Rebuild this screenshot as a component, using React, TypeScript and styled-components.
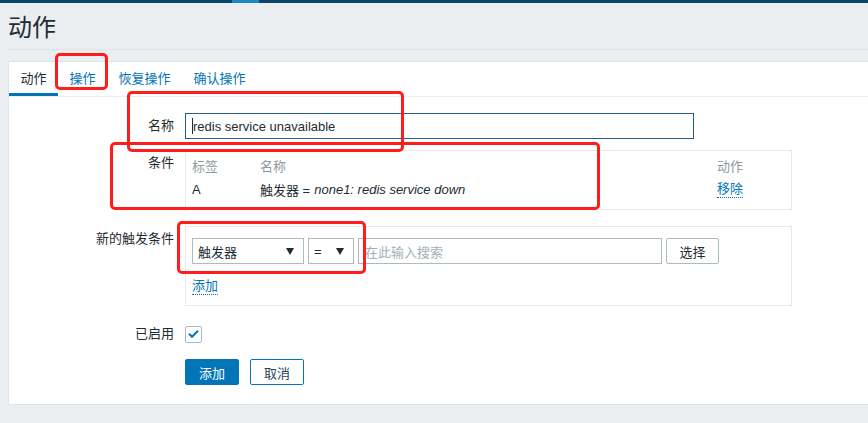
import React from "react";
import styled, { createGlobalStyle } from "styled-components";

const Global = createGlobalStyle`
  html, body { margin: 0; padding: 0; background: #ebeef0; }
  body {
    font-family: "Liberation Sans", Arial, "Noto Sans CJK SC", sans-serif;
    font-size: 13px;
    color: #1f2c33;
  }
  * { box-sizing: border-box; }
`;

const Page = styled.div`
  position: relative;
  width: 868px;
  height: 423px;
  overflow: hidden;
`;

const TopBar = styled.div`
  display: flex;
  height: 3px;
  background: #0b4668;
`;

const TopBarMark = styled.div`
  margin-left: 232px;
  width: 27px;
  background: #1e87c9;
`;

const Header = styled.header`
  margin-left: 8px;
  height: 47px;
  padding-top: 10px;
  border-bottom: 1px solid #dde2e5;
`;

const Title = styled.h1`
  margin: 0;
  font-size: 24px;
  line-height: 30px;
  font-weight: normal;
  color: #1f2c33;
`;

const Panel = styled.main`
  margin: 11px 0 0 8px;
  height: 344px;
  background: #fff;
  border: 1px solid #dfe4e7;
  border-right: none;
`;

const Tabs = styled.nav`
  display: flex;
  height: 35px;
  border-bottom: 1px solid #ebeef0;
`;

const Tab = styled.div<{ $active?: boolean }>`
  display: flex;
  align-items: center;
  height: 34px;
  padding: 0 11.5px;
  border-bottom: 3px solid ${(p) => (p.$active ? "#0275b8" : "transparent")};
  color: ${(p) => (p.$active ? "#1f2c33" : "#0275b8")};
`;

const Form = styled.div`
  padding-top: 16px;
`;

const Row = styled.div<{ $mt?: number }>`
  display: grid;
  grid-template-columns: 165px 1fr;
  column-gap: 11px;
  align-items: start;
  margin-top: ${(p) => p.$mt ?? 0}px;
`;

const Label = styled.div`
  text-align: right;
  line-height: 26px;
  white-space: nowrap;
`;

const NameInput = styled.div`
  display: flex;
  align-items: center;
  width: 509px;
  height: 26px;
  padding: 0 6px;
  border: 1px solid #235f8a;
  background: #fff;
`;

const Caret = styled.span`
  display: inline-block;
  width: 1px;
  height: 16px;
  background: #1f2c33;
`;

const Frame = styled.div`
  width: 607px;
  border: 1px solid #e6e9eb;
`;

const ConditionGrid = styled.div`
  display: grid;
  grid-template-columns: 68px 1fr 68px;
  padding: 2px 6px 8px;
`;

const Cell = styled.div<{ $head?: boolean }>`
  display: flex;
  align-items: center;
  height: 24px;
  color: ${(p) => (p.$head ? "#8f99a0" : "#1f2c33")};
  white-space: nowrap;
`;

const Italic = styled.em`
  font-style: italic;
  margin-left: 4px;
`;

const Link = styled.span`
  display: inline-block;
  line-height: 17px;
  color: #0275b8;
  border-bottom: 1px dotted #0275b8;
`;

const NewCondition = styled.div`
  padding: 11px 6px 10px;
`;

const Controls = styled.div`
  display: flex;
  gap: 4px;
`;

const Select = styled.div<{ $w: number }>`
  display: flex;
  align-items: center;
  justify-content: space-between;
  width: ${(p) => p.$w}px;
  height: 26px;
  padding: 0 9px 0 5px;
  border: 1px solid #acbbc2;
  background: #fff;
`;

const Arrow = styled.span`
  width: 0;
  height: 0;
  border-left: 4px solid transparent;
  border-right: 4px solid transparent;
  border-top: 7px solid #1f2c33;
`;

const Search = styled.div`
  display: flex;
  align-items: center;
  width: 304px;
  height: 26px;
  padding-left: 6px;
  border: 1px solid #acbbc2;
  color: #a4aeb4;
  background: #fff;
`;

const GreyButton = styled.div`
  display: flex;
  align-items: center;
  justify-content: center;
  width: 53px;
  height: 26px;
  border: 1px solid #acbbc2;
  border-radius: 2px;
  background: #fff;
  color: #1f2c33;
`;

const AddLink = styled.div`
  margin-top: 13px;
`;

const CheckHolder = styled.div`
  display: flex;
  align-items: center;
  height: 26px;
`;

const CheckBox = styled.div`
  display: flex;
  align-items: center;
  justify-content: center;
  width: 17px;
  height: 17px;
  border: 1px solid #acbbc2;
  border-radius: 2px;
  background: #fff;
`;

const Buttons = styled.div`
  display: flex;
  gap: 11px;
`;

const Button = styled.div<{ $primary?: boolean }>`
  display: flex;
  align-items: center;
  justify-content: center;
  width: 54px;
  height: 26px;
  border-radius: 2px;
  border: 1px solid #0275b8;
  background: ${(p) => (p.$primary ? "#0275b8" : "#fff")};
  color: ${(p) => (p.$primary ? "#fff" : "#2a4656")};
`;

const RedBox = styled.div<{ $x: number; $y: number; $w: number; $h: number }>`
  position: absolute;
  left: ${(p) => p.$x}px;
  top: ${(p) => p.$y}px;
  width: ${(p) => p.$w}px;
  height: ${(p) => p.$h}px;
  border: 3px solid #ff1c1c;
  border-radius: 5px;
  pointer-events: none;
`;

export default function App() {
  return (
    <Page>
      <Global />
      <TopBar>
        <TopBarMark />
      </TopBar>
      <Header>
        <Title>动作</Title>
      </Header>
      <Panel>
        <Tabs>
          <Tab $active>动作</Tab>
          <Tab>操作</Tab>
          <Tab>恢复操作</Tab>
          <Tab>确认操作</Tab>
        </Tabs>
        <Form>
          <Row>
            <Label>名称</Label>
            <NameInput>
              <Caret />
              redis service unavailable
            </NameInput>
          </Row>
          <Row $mt={11}>
            <Label>条件</Label>
            <Frame>
              <ConditionGrid>
                <Cell $head>标签</Cell>
                <Cell $head>名称</Cell>
                <Cell $head>动作</Cell>
                <Cell>A</Cell>
                <Cell>
                  触发器 =<Italic>none1: redis service down</Italic>
                </Cell>
                <Cell>
                  <Link>移除</Link>
                </Cell>
              </ConditionGrid>
            </Frame>
          </Row>
          <Row $mt={16}>
            <Label>新的触发条件</Label>
            <Frame>
              <NewCondition>
                <Controls>
                  <Select $w={112}>
                    触发器
                    <Arrow />
                  </Select>
                  <Select $w={46}>
                    =
                    <Arrow />
                  </Select>
                  <Search>在此输入搜索</Search>
                  <GreyButton>选择</GreyButton>
                </Controls>
                <AddLink>
                  <Link>添加</Link>
                </AddLink>
              </NewCondition>
            </Frame>
          </Row>
          <Row $mt={15}>
            <Label>已启用</Label>
            <CheckHolder>
              <CheckBox>
                <svg width="13" height="10" viewBox="0 0 13 10">
                  <path
                    d="M2 4.8 L5 7.8 L11 1.8"
                    fill="none"
                    stroke="#0275b8"
                    strokeWidth="2"
                  />
                </svg>
              </CheckBox>
            </CheckHolder>
          </Row>
          <Row $mt={12}>
            <div />
            <Buttons>
              <Button $primary>添加</Button>
              <Button>取消</Button>
            </Buttons>
          </Row>
        </Form>
      </Panel>
      <RedBox $x={55} $y={53} $w={53} $h={37} />
      <RedBox $x={127} $y={91} $w={277} $h={61} />
      <RedBox $x={110} $y={142} $w={490} $h={68} />
      <RedBox $x={177} $y={221} $w={189} $h={53} />
    </Page>
  );
}
